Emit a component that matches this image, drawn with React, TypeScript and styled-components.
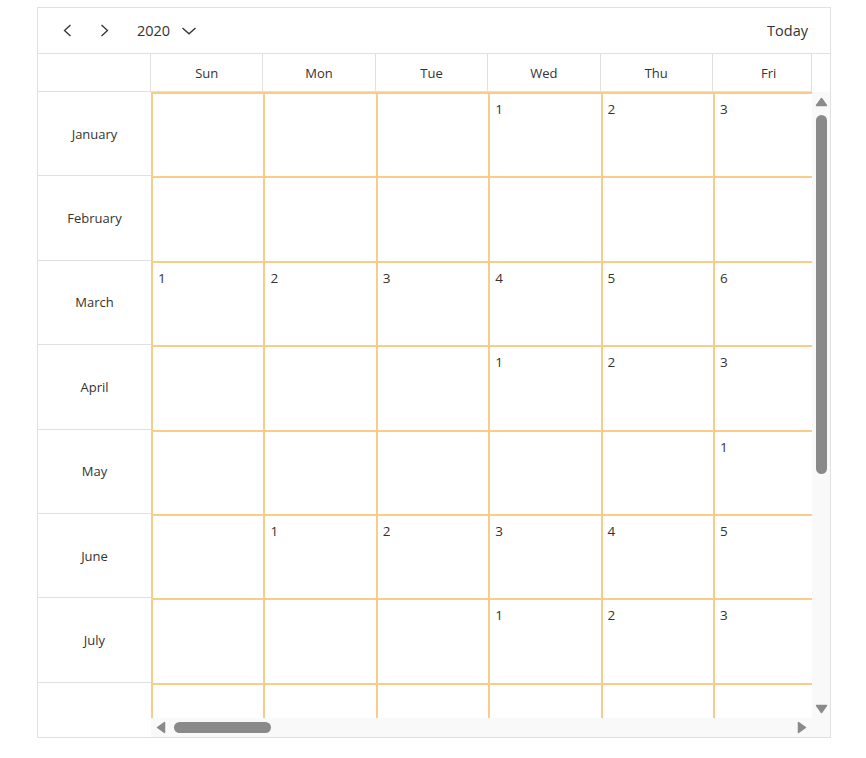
import React from 'react';
import styled, { createGlobalStyle } from 'styled-components';

const GlobalStyle = createGlobalStyle`
	html, body {
		margin: 0;
		padding: 0;
		background: #ffffff;
	}

	body {
		font-family: 'Open Sans', 'Noto Sans', sans-serif;
		color: #333333;
	}
`;

const LINE = '#e0e0e0';
const CELL_LINE = '#f9cd87';
const TRACK = '#f9f9f9';
const SCROLL = '#8a8a8a';

const COL_WIDTH = 112.4;
const ROW_HEIGHT = 84.4;

// the last row is only partly in view, its label sits below the fold
const MONTHS = ['January', 'February', 'March', 'April', 'May', 'June', 'July', ''];
// Sat lies past the right edge of the scroll area
const DAYS = ['Sun', 'Mon', 'Tue', 'Wed', 'Thu', 'Fri'];
const YEAR = 2020;

// date shown in column `col` of a month row, or nothing before the 1st
function dateFor(month: number, col: number) {
	const first = new Date(YEAR, month, 1).getDay();
	const day = col - first + 1;
	return day >= 1 ? day : null;
}

export default function App() {
	return (
		<Page>
			<GlobalStyle />
			<Calendar>
				<Toolbar>
					<NavButton aria-label="Previous">
						<Chevron direction="left" />
					</NavButton>
					<NavButton aria-label="Next">
						<Chevron direction="right" />
					</NavButton>
					<YearPicker>
						2020
						<svg width="16" height="8" viewBox="0 0 16 8">
							<path d="M1.5 1 L8 6.8 L14.5 1" fill="none" stroke="#333" strokeWidth="1.3" />
						</svg>
					</YearPicker>
					<TodayButton>Today</TodayButton>
				</Toolbar>

				<Board>
					<HeaderCorner />
					<DayHeaderRow>
						{DAYS.map(day => (
							<DayHeaderCell key={day}>{day}</DayHeaderCell>
						))}
					</DayHeaderRow>
					<HeaderGutter />

					<MonthColumn>
						{MONTHS.map((month, m) => (
							<MonthCell key={m}>{month}</MonthCell>
						))}
					</MonthColumn>

					<DayViewport>
						<DayGrid>
							{MONTHS.map((month, m) =>
								DAYS.map((day, c) => (
									<DayCell key={m + day}>{dateFor(m, c)}</DayCell>
								))
							)}
						</DayGrid>
					</DayViewport>

					<VerticalTrack>
						<Arrow direction="up" />
						<VerticalThumb size={359} />
						<Arrow direction="down" />
					</VerticalTrack>

					<BottomBlank />

					<HorizontalTrack>
						<Arrow direction="left" />
						<HorizontalThumb size={97} />
						<Arrow direction="right" />
					</HorizontalTrack>

					<ScrollCorner />
				</Board>
			</Calendar>
		</Page>
	);
}

function Chevron({ direction }: { direction: 'left' | 'right' }) {
	const d = direction === 'left' ? 'M7.5 1 L1.5 6.5 L7.5 12' : 'M1.5 1 L7.5 6.5 L1.5 12';
	return (
		<svg width="9" height="13" viewBox="0 0 9 13">
			<path d={d} fill="none" stroke="#333" strokeWidth="1.3" />
		</svg>
	);
}

const ARROWS = {
	up: { w: 13, h: 10, d: 'M6.5 1.5 L11.5 8.5 L1.5 8.5 Z' },
	down: { w: 13, h: 10, d: 'M1.5 1.5 L11.5 1.5 L6.5 8.5 Z' },
	left: { w: 10, h: 13, d: 'M8.5 1.5 L8.5 11.5 L1.5 6.5 Z' },
	right: { w: 10, h: 13, d: 'M1.5 1.5 L8.5 6.5 L1.5 11.5 Z' }
};

function Arrow({ direction }: { direction: keyof typeof ARROWS }) {
	const a = ARROWS[direction];
	return (
		<ArrowIcon width={a.w} height={a.h} viewBox={`0 0 ${a.w} ${a.h}`}>
			<path d={a.d} fill={SCROLL} stroke={SCROLL} strokeWidth="1.5" strokeLinejoin="round" />
		</ArrowIcon>
	);
}

const Page = styled.div`
	padding: 7px 0 0 37px;
`;

const Calendar = styled.div`
	width: 794px;
	height: 731px;
	box-sizing: border-box;
	border: 1px solid ${LINE};
	display: flex;
	flex-direction: column;
	background: #ffffff;
`;

const Toolbar = styled.div`
	height: 46px;
	box-sizing: border-box;
	border-bottom: 1px solid ${LINE};
	display: flex;
	align-items: center;
	padding: 0 22px 0 11px;
	flex-shrink: 0;
`;

const NavButton = styled.button`
	width: 36px;
	height: 32px;
	margin-right: 1px;
	border: none;
	background: transparent;
	padding: 0;
	display: flex;
	align-items: center;
	justify-content: center;
	cursor: pointer;
`;

const YearPicker = styled.div`
	margin-left: 14px;
	display: flex;
	align-items: center;
	gap: 11px;
	font-size: 14.5px;
	color: #333333;

	svg {
		margin-top: 1px;
	}
`;

const TodayButton = styled.div`
	margin-left: auto;
	font-size: 14.5px;
	color: #333333;
`;

const Board = styled.div`
	flex: 1;
	display: grid;
	grid-template-columns: 113px 661px 18px;
	grid-template-rows: 38px 626px 19px;
`;

const HeaderCorner = styled.div`
	box-sizing: border-box;
	border-right: 1px solid ${LINE};
	border-bottom: 1px solid ${LINE};
`;

const DayHeaderRow = styled.div`
	box-sizing: border-box;
	border-right: 1px solid ${LINE};
	border-bottom: 1px solid ${LINE};
	overflow: hidden;
	display: grid;
	grid-template-columns: repeat(6, ${COL_WIDTH}px);
`;

const DayHeaderCell = styled.div`
	box-sizing: border-box;
	border-right: 1px solid ${LINE};
	display: flex;
	align-items: center;
	justify-content: center;
	font-size: 13px;
	color: #333333;
`;

const HeaderGutter = styled.div``;

const MonthColumn = styled.div`
	overflow: hidden;
`;

const MonthCell = styled.div`
	height: ${ROW_HEIGHT}px;
	box-sizing: border-box;
	border-bottom: 1px solid ${LINE};
	display: flex;
	align-items: center;
	justify-content: center;
	font-size: 13px;
	color: #333333;
`;

const DayViewport = styled.div`
	overflow: hidden;
`;

const DayGrid = styled.div`
	display: grid;
	grid-template-columns: repeat(6, ${COL_WIDTH}px);
	grid-auto-rows: ${ROW_HEIGHT}px;
`;

const DayCell = styled.div`
	box-sizing: border-box;
	border-left: 2px solid ${CELL_LINE};
	border-top: 2px solid ${CELL_LINE};
	padding: 5px 0 0 5px;
	font-size: 13.5px;
	line-height: 20px;
	color: #333333;
`;

const ArrowIcon = styled.svg`
	display: block;
	flex-shrink: 0;
`;

const VerticalTrack = styled.div`
	background: ${TRACK};
	display: flex;
	flex-direction: column;
	align-items: center;
	padding: 5px 0 4px 1px;
	box-sizing: border-box;
`;

const VerticalThumb = styled.div<{ size: number }>`
	width: 11px;
	height: ${p => p.size}px;
	margin-top: 8px;
	margin-bottom: auto;
	border-radius: 6px;
	background: ${SCROLL};
`;

const BottomBlank = styled.div``;

const HorizontalTrack = styled.div`
	background: ${TRACK};
	display: flex;
	align-items: center;
	padding: 0 5px 0 5px;
	box-sizing: border-box;
`;

const HorizontalThumb = styled.div<{ size: number }>`
	height: 11px;
	width: ${p => p.size}px;
	margin-left: 8px;
	margin-right: auto;
	border-radius: 6px;
	background: ${SCROLL};
`;

const ScrollCorner = styled.div`
	background: ${TRACK};
`;
